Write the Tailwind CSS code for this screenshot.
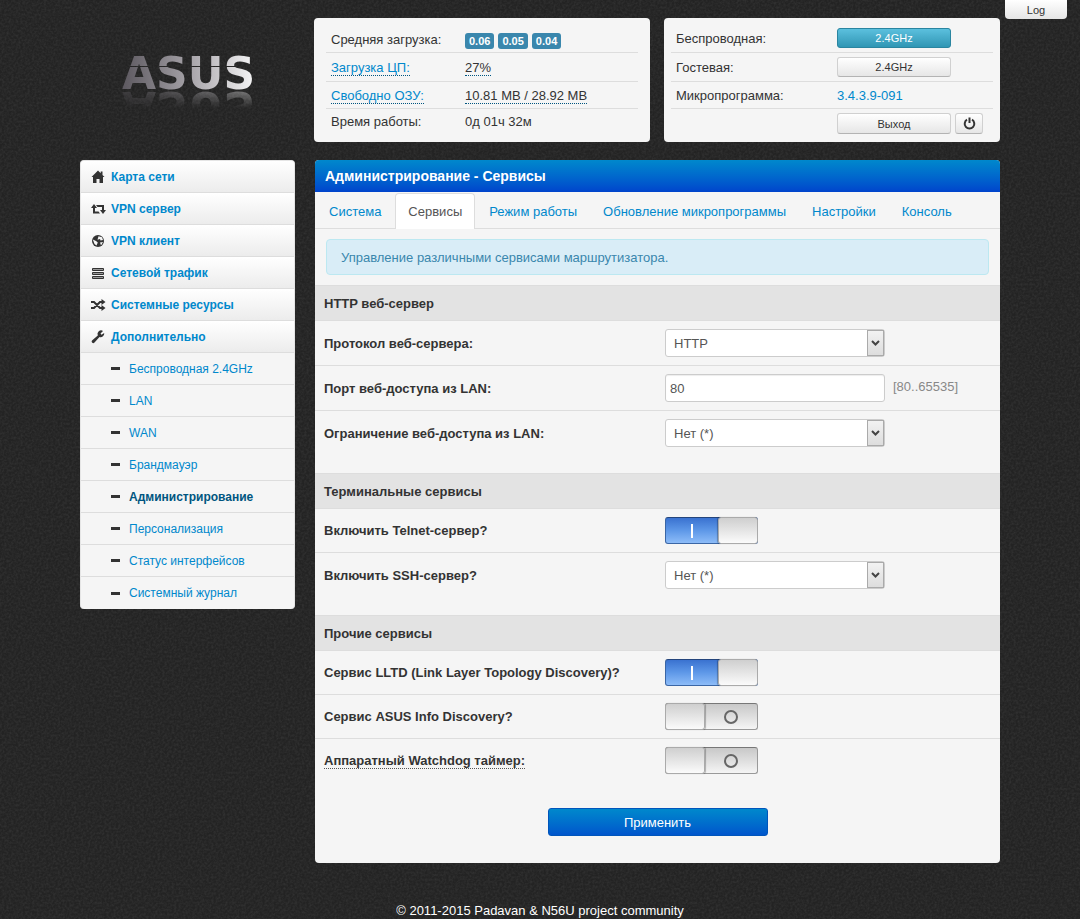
<!DOCTYPE html>
<html lang="ru">
<head>
  <meta charset="utf-8" />
  <meta name="viewport" content="width=device-width, initial-scale=1.0" />
  <title>Администрирование - Сервисы</title>
  <script src="https://cdn.jsdelivr.net/npm/@tailwindcss/browser@4"></script>
</head>
<body class="relative isolate min-h-screen bg-[#262626] font-['Liberation_Sans',Arial,sans-serif] text-[13px] leading-5 text-[#333333]">
  <!-- grainy backdrop -->
  <svg class="absolute inset-0 -z-10 h-full w-full" aria-hidden="true">
    <filter id="grain" x="0" y="0" width="100%" height="100%">
      <feTurbulence type="fractalNoise" baseFrequency="0.43" numOctaves="2" />
      <feColorMatrix values="0 0 0 0 1  0 0 0 0 1  0 0 0 0 1  0.12 0 0 0 -0.04" />
    </filter>
    <rect width="100%" height="100%" fill="#232323" />
    <rect width="100%" height="100%" filter="url(#grain)" />
  </svg>

  <button type="button" class="absolute top-0 right-[13px] h-[19px] w-[62px] rounded-b bg-linear-to-b from-white to-[#e6e6e6] text-[11px] leading-4">Log</button>

  <div class="mx-auto max-w-[920px] pt-[18px]">
    <!-- logo + status panels -->
    <header class="flex gap-[14px]">
      <div class="flex-1 pt-[34px] pl-[42px]">
        <a href="#home" class="block h-[38px] w-[140px] [-webkit-box-reflect:below_1px_linear-gradient(transparent_55%,rgba(255,255,255,0.4))]">
          <span class="block h-[38px] bg-linear-to-r from-[#5c585f] via-[#a9a6ab] to-white bg-clip-text font-['DejaVu_Sans',sans-serif] text-[44px] leading-[44px] font-bold text-transparent [mask-image:linear-gradient(black_14px,transparent_14px,transparent_15px,black_15px)]">ASUS</span>
        </a>
      </div>

      <section class="w-[336px] rounded bg-[#f5f5f5] px-3 pt-[7px] pb-[7px]">
        <table class="w-full table-fixed text-left">
          <tbody>
            <tr class="h-[27px] border-b border-[#dddddd]">
              <th class="w-[134px] pt-[3px] pl-[5px] font-normal">Средняя загрузка:</th>
              <td class="pl-[5px]">
                <div class="flex gap-1 pt-[5px] text-[11px] leading-4 font-bold text-white">
                  <span class="rounded-[3px] bg-[#3a87ad] px-1">0.06</span>
                  <span class="rounded-[3px] bg-[#3a87ad] px-1">0.05</span>
                  <span class="rounded-[3px] bg-[#3a87ad] px-1">0.04</span>
                </div>
              </td>
            </tr>
            <tr class="h-[29px] border-b border-[#dddddd]">
              <th class="pt-[2px] pl-[5px] font-normal"><a href="#cpu" class="border-b border-dotted border-[#005580] text-[#0088cc]">Загрузка ЦП:</a></th>
              <td class="pt-[2px] pl-[5px]"><span class="border-b border-dotted border-[#005580]">27%</span></td>
            </tr>
            <tr class="h-[27px] border-b border-[#dddddd]">
              <th class="pt-[2px] pl-[5px] font-normal"><a href="#mem" class="border-b border-dotted border-[#005580] text-[#0088cc]">Свободно ОЗУ:</a></th>
              <td class="pt-[2px] pl-[5px]"><span class="border-b border-dotted border-[#005580]">10.81 MB / 28.92 MB</span></td>
            </tr>
            <tr class="h-[27px]">
              <th class="pl-[5px] font-normal"><div class="h-[15px] overflow-hidden leading-4">Время работы:</div></th>
              <td class="pl-[5px]"><div class="h-[15px] overflow-hidden leading-4">0д 01ч 32м</div></td>
            </tr>
          </tbody>
        </table>
      </section>

      <section class="w-[336px] rounded bg-[#f5f5f5] px-[7px] pt-[7px] pb-[7px]">
        <table class="w-full table-fixed text-left">
          <tbody>
            <tr class="h-[27px] border-b border-[#dddddd]">
              <th class="w-[161px] pt-[2px] pl-[5px] font-normal">Беспроводная:</th>
              <td class="pl-[5px]"><button type="button" class="block h-5 w-[114px] rounded-[3px] border border-[#2a85a0] bg-linear-to-b from-[#5bc0de] to-[#2f96b4] text-[11px] leading-4 text-white">2.4GHz</button></td>
            </tr>
            <tr class="h-[29px] border-b border-[#dddddd]">
              <th class="pt-[2px] pl-[5px] font-normal">Гостевая:</th>
              <td class="pl-[5px]"><button type="button" class="block h-5 w-[114px] rounded-[3px] border border-[#d0d0d0] border-b-[#b3b3b3] bg-linear-to-b from-white to-[#e6e6e6] text-[11px] leading-4">2.4GHz</button></td>
            </tr>
            <tr class="h-[27px] border-b border-[#dddddd]">
              <th class="pt-[2px] pl-[5px] font-normal">Микропрограмма:</th>
              <td class="pt-[2px] pl-[5px]"><a href="#firmware" class="text-[#0088cc]">3.4.3.9-091</a></td>
            </tr>
            <tr class="h-[27px]">
              <th></th>
              <td class="pl-[5px]">
                <div class="flex gap-1 pt-1">
                  <button type="button" class="h-[21px] w-[114px] rounded-[3px] border border-[#d0d0d0] border-b-[#b3b3b3] bg-linear-to-b from-white to-[#e6e6e6] text-[11px] leading-4">Выход</button>
                  <button type="button" aria-label="Перезагрузка" class="flex h-[21px] w-7 items-center justify-center rounded-[3px] border border-[#d0d0d0] border-b-[#b3b3b3] bg-linear-to-b from-white to-[#e6e6e6]">
                    <svg class="size-[13px]" viewBox="0 0 13 13" fill="none" stroke="#333333" stroke-width="2"><path d="M4 2.700A4.800 4.800 0 1 0 9 2.700M6.500 0.500V6" /></svg>
                  </button>
                </div>
              </td>
            </tr>
          </tbody>
        </table>
      </section>
    </header>

    <div class="mt-[18px] flex items-start gap-5">
      <!-- side menu -->
      <nav class="w-[215px] overflow-hidden rounded border border-b-0 border-[#e5e5e5] bg-[#f5f5f5] text-[12px] text-[#0088cc]">
        <ul class="font-bold [&>li]:h-8 [&>li]:border-b [&>li]:border-[#dddddd] [&>li]:bg-linear-to-b [&>li]:from-white [&>li]:to-[#ececec] [&_a]:flex [&_a]:h-full [&_a]:items-center [&_a]:gap-[5px] [&_a]:pl-[10px] [&_svg]:size-[15px] [&_svg]:text-[#333333]">
          <li><a href="#map">
            <svg viewBox="0 0 15 15" fill="currentColor"><path d="M7 1.500L0.500 8H2V14H5.500V10H8.500V14H12V8H13.500L11.500 6V2.500H9.700V4.200Z" /></svg>Карта сети</a></li>
          <li><a href="#vpn-server">
            <svg viewBox="0 0 15 15" fill="currentColor"><path d="M3 3L6 7H4V10.500H7.500L9 12.500H2V7H0ZM5 4H13V9H15L12 13L9 9H11V6H6.500Z" /></svg>VPN сервер</a></li>
          <li><a href="#vpn-client">
            <svg viewBox="0 0 15 15"><circle cx="7" cy="8" r="6" fill="currentColor" /><path d="M7.500 3.200L11 4.200L12 7L9.500 7.500L9 6L6.500 6.800ZM1.800 6.500L5 8L6.800 9.500L5.500 12.500L3.500 11ZM9 9.500L12 9L10 12.500Z" fill="#f5f5f5" /></svg>VPN клиент</a></li>
          <li><a href="#traffic">
            <svg viewBox="0 0 15 15" fill="#999999" stroke="currentColor"><path d="M1.500 3.500H12.500V5.500H1.500ZM1.500 7.500H12.500V9.500H1.500ZM1.500 11.500H12.500V13.500H1.500Z" /></svg>Сетевой трафик</a></li>
          <li><a href="#resources">
            <svg viewBox="0 0 15 15" fill="none" stroke="currentColor" stroke-width="2"><path d="M0 5H3L9 11H11M0 11H3L9 5H11" /><path d="M10.500 2L14.500 5L10.500 8ZM10.500 8L14.500 11L10.500 14Z" fill="currentColor" stroke="none" /></svg>Системные ресурсы</a></li>
          <li><a href="#advanced">
            <svg viewBox="0 0 15 15" fill="currentColor"><path d="M12 2L9.500 4.500L10.500 5.700L13.200 4A3.600 3.600 0 0 1 8.500 8L3.500 13.500A1.600 1.600 0 0 1 1 11.500L6.800 6.500A3.600 3.600 0 0 1 12 2Z" /></svg>Дополнительно</a></li>
        </ul>
        <ul class="[&>li]:h-8 [&>li]:border-b [&>li]:border-[#dddddd] [&>li:last-child]:border-b-0 [&_a]:flex [&_a]:h-full [&_a]:items-center [&_a]:gap-[9px] [&_a]:pl-[30px] [&_a]:before:h-[3px] [&_a]:before:w-[9px] [&_a]:before:bg-[#333333] [&_a]:before:content-['']">
          <li><a href="#wireless">Беспроводная 2.4GHz</a></li>
          <li><a href="#lan">LAN</a></li>
          <li><a href="#wan">WAN</a></li>
          <li><a href="#firewall">Брандмауэр</a></li>
          <li><a href="#admin" class="font-bold text-[#005580]">Администрирование</a></li>
          <li><a href="#personal">Персонализация</a></li>
          <li><a href="#interfaces">Статус интерфейсов</a></li>
          <li><a href="#syslog">Системный журнал</a></li>
        </ul>
      </nav>

      <!-- services form -->
      <main class="min-w-0 flex-1 overflow-hidden rounded bg-[#f5f5f5] pb-[27px]">
        <h1 class="h-8 bg-linear-to-b from-[#0088cc] to-[#0044cc] pl-[10px] text-[14px] leading-8 font-bold text-white">Администрирование - Сервисы</h1>

        <nav class="flex h-[37px] gap-[2px] border-b border-[#dddddd] pt-px text-[#0088cc] [&>a]:h-9 [&>a]:px-3 [&>a]:leading-[37px]">
          <a href="#system" class="pl-[14px]!">Система</a>
          <a href="#services" class="rounded-t border border-b-0 border-[#dddddd] bg-white leading-9! text-[#555555]">Сервисы</a>
          <a href="#mode">Режим работы</a>
          <a href="#upgrade">Обновление микропрограммы</a>
          <a href="#settings">Настройки</a>
          <a href="#console">Консоль</a>
        </nav>

        <p class="mx-[11px] my-[10px] h-9 rounded border border-[#bce8f1] bg-[#d9edf7] pl-[14px] leading-9 text-[#3a87ad]">Управление различными сервисами маршрутизатора.</p>

        <form>
          <h2 class="h-9 border-y border-[#dddddd] bg-[#e3e3e3] pl-[9px] leading-9 font-bold">HTTP веб-сервер</h2>
          <div class="flex h-[45px] items-center border-b border-[#dddddd] pl-[9px]">
            <label for="proto" class="w-[341px] pt-[2px] font-bold">Протокол веб-сервера:</label>
            <div class="relative w-[220px]">
              <select id="proto" class="block h-7 w-full appearance-none rounded-[3px] border border-[#cccccc] bg-white pt-px pl-2 text-[#555555]"><option>HTTP</option><option>HTTPS</option></select>
              <span class="pointer-events-none absolute inset-y-px right-px flex w-[17px] items-center justify-center border border-[#aaaaaa] bg-linear-to-b from-[#f2f2f2] to-[#dddddd]">
                <svg class="h-[6px] w-[9px]" viewBox="0 0 9 6" fill="none" stroke="#444444" stroke-width="2"><path d="M1 1L4.500 4.500L8 1" /></svg>
              </span>
            </div>
          </div>
          <div class="flex h-[45px] items-center border-b border-[#dddddd] pl-[9px]">
            <label for="port" class="w-[341px] pt-[2px] font-bold">Порт веб-доступа из LAN:</label>
            <input id="port" type="text" value="80" class="h-7 w-[220px] rounded-[3px] border border-[#cccccc] bg-white px-1 text-[#555555] shadow-[inset_0_1px_1px_#00000013]" />
            <span class="pb-[2px] pl-2 text-[#888888]">[80..65535]</span>
          </div>
          <div class="flex h-[62px] items-start pt-2 pl-[9px]">
            <label for="access" class="w-[341px] pt-px leading-7 font-bold">Ограничение веб-доступа из LAN:</label>
            <div class="relative w-[220px]">
              <select id="access" class="block h-7 w-full appearance-none rounded-[3px] border border-[#cccccc] bg-white pt-px pl-2 text-[#555555]"><option>Нет (*)</option></select>
              <span class="pointer-events-none absolute inset-y-px right-px flex w-[17px] items-center justify-center border border-[#aaaaaa] bg-linear-to-b from-[#f2f2f2] to-[#dddddd]">
                <svg class="h-[6px] w-[9px]" viewBox="0 0 9 6" fill="none" stroke="#444444" stroke-width="2"><path d="M1 1L4.500 4.500L8 1" /></svg>
              </span>
            </div>
          </div>

          <h2 class="h-9 border-y border-[#dddddd] bg-[#e3e3e3] pl-[9px] leading-9 font-bold">Терминальные сервисы</h2>
          <div class="flex h-11 items-center border-b border-[#dddddd] pl-[9px]">
            <label for="telnet" class="w-[341px] font-bold">Включить Telnet-сервер?</label>
            <div class="relative h-[27px] w-[93px]">
              <input id="telnet" type="checkbox" checked class="absolute inset-0 size-full appearance-none rounded-[3px] border border-[#3a66a5] border-t-[#24457c] bg-linear-to-b from-[#3a72d0] via-[#5e98e8] to-[#8dbcf8]" />
              <span class="pointer-events-none absolute top-[7px] left-[26px] h-[14px] w-[2px] bg-white"></span>
              <span class="pointer-events-none absolute inset-y-0 right-0 w-10 rounded-[3px] border border-[#aaaaaa] bg-linear-to-b from-[#cfcfcf] to-[#fbfbfb] shadow-[-1px_0_1px_#00000044]"></span>
            </div>
          </div>
          <div class="flex h-[62px] items-start pt-2 pl-[9px]">
            <label for="ssh" class="w-[341px] pt-px leading-7 font-bold">Включить SSH-сервер?</label>
            <div class="relative w-[220px]">
              <select id="ssh" class="block h-7 w-full appearance-none rounded-[3px] border border-[#cccccc] bg-white pt-px pl-2 text-[#555555]"><option>Нет (*)</option></select>
              <span class="pointer-events-none absolute inset-y-px right-px flex w-[17px] items-center justify-center border border-[#aaaaaa] bg-linear-to-b from-[#f2f2f2] to-[#dddddd]">
                <svg class="h-[6px] w-[9px]" viewBox="0 0 9 6" fill="none" stroke="#444444" stroke-width="2"><path d="M1 1L4.500 4.500L8 1" /></svg>
              </span>
            </div>
          </div>

          <h2 class="h-9 border-y border-[#dddddd] bg-[#e3e3e3] pl-[9px] leading-9 font-bold">Прочие сервисы</h2>
          <div class="flex h-11 items-center border-b border-[#dddddd] pl-[9px]">
            <label for="lltd" class="w-[341px] font-bold">Сервис LLTD (Link Layer Topology Discovery)?</label>
            <div class="relative h-[27px] w-[93px]">
              <input id="lltd" type="checkbox" checked class="absolute inset-0 size-full appearance-none rounded-[3px] border border-[#3a66a5] border-t-[#24457c] bg-linear-to-b from-[#3a72d0] via-[#5e98e8] to-[#8dbcf8]" />
              <span class="pointer-events-none absolute top-[7px] left-[26px] h-[14px] w-[2px] bg-white"></span>
              <span class="pointer-events-none absolute inset-y-0 right-0 w-10 rounded-[3px] border border-[#aaaaaa] bg-linear-to-b from-[#cfcfcf] to-[#fbfbfb] shadow-[-1px_0_1px_#00000044]"></span>
            </div>
          </div>
          <div class="flex h-11 items-center border-b border-[#dddddd] pl-[9px]">
            <label for="discovery" class="w-[341px] font-bold">Сервис ASUS Info Discovery?</label>
            <div class="relative h-[27px] w-[93px]">
              <input id="discovery" type="checkbox" class="absolute inset-0 size-full appearance-none rounded-[3px] border border-[#999999] border-t-[#777777] bg-linear-to-b from-[#c8c8c8] via-[#dedede] to-[#f5f5f5]" />
              <span class="pointer-events-none absolute top-[7px] right-5 size-[14px] rounded-full border-2 border-[#666666]"></span>
              <span class="pointer-events-none absolute inset-y-0 left-0 w-10 rounded-[3px] border border-[#aaaaaa] bg-linear-to-b from-[#cfcfcf] to-[#fbfbfb] shadow-[1px_0_1px_#00000044]"></span>
            </div>
          </div>
          <div class="flex h-[43px] items-center pl-[9px]">
            <label for="watchdog" class="w-[341px] font-bold"><span class="border-b border-dotted border-[#555555]">Аппаратный Watchdog таймер:</span></label>
            <div class="relative h-[27px] w-[93px]">
              <input id="watchdog" type="checkbox" class="absolute inset-0 size-full appearance-none rounded-[3px] border border-[#999999] border-t-[#777777] bg-linear-to-b from-[#c8c8c8] via-[#dedede] to-[#f5f5f5]" />
              <span class="pointer-events-none absolute top-[7px] right-5 size-[14px] rounded-full border-2 border-[#666666]"></span>
              <span class="pointer-events-none absolute inset-y-0 left-0 w-10 rounded-[3px] border border-[#aaaaaa] bg-linear-to-b from-[#cfcfcf] to-[#fbfbfb] shadow-[1px_0_1px_#00000044]"></span>
            </div>
          </div>

          <button type="submit" class="mx-auto mt-[26px] block h-7 w-[220px] rounded-[3px] border border-[#0055bb] bg-linear-to-b from-[#0088cc] to-[#0055cc] pt-px text-white">Применить</button>
        </form>
      </main>
    </div>

    <footer class="pt-[38px] text-center text-white">© 2011-2015 Padavan &amp; N56U project community</footer>
  </div>
</body>
</html>
